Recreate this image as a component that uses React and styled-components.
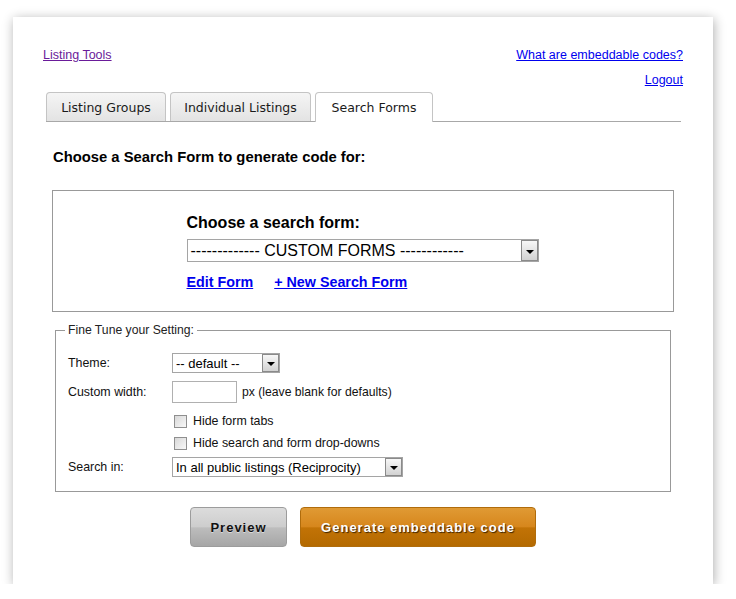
import React from "react";
import styled, { createGlobalStyle } from "styled-components";

const GlobalStyle = createGlobalStyle`
  html, body {
    margin: 0;
    padding: 0;
    background: #fff;
  }
  body {
    font-family: "Liberation Sans", Arial, sans-serif;
    font-size: 12px;
    color: #000;
  }
`;

const tabs = [
  { label: "Listing Groups", width: 120 },
  { label: "Individual Listings", width: 141 },
  { label: "Search Forms", width: 118, active: true },
];

function App() {
  return (
    <>
      <GlobalStyle />
      <Card>
        <TopRow>
          <NavLink href="#" $visited>
            Listing Tools
          </NavLink>
          <NavLink href="#">What are embeddable codes?</NavLink>
        </TopRow>
        <LogoutRow>
          <NavLink href="#">Logout</NavLink>
        </LogoutRow>

        <TabBar>
          {tabs.map((t) => (
            <Tab key={t.label} $active={t.active} $width={t.width}>
              {t.label}
            </Tab>
          ))}
        </TabBar>

        <Heading>Choose a Search Form to generate code for:</Heading>

        <ChooserBox>
          <Chooser>
            <ChooserTitle>Choose a search form:</ChooserTitle>
            <Select $width={352} $height={23} $size={16}>
              <span>------------- CUSTOM FORMS ------------</span>
              <Arrow $height={21} />
            </Select>
            <ActionLinks>
              <BoldLink href="#">Edit Form</BoldLink>
              <BoldLink href="#">+ New Search Form</BoldLink>
            </ActionLinks>
          </Chooser>
        </ChooserBox>

        <Settings>
          <Legend>Fine Tune your Setting:</Legend>
          <Row $h={20}>
            <Label>Theme:</Label>
            <Select $width={108} $height={20} $size={13}>
              <span>-- default --</span>
              <Arrow $height={18} />
            </Select>
          </Row>
          <Row $h={22} $mt={8}>
            <Label>Custom width:</Label>
            <WidthInput type="text" />
            <Hint>px (leave blank for defaults)</Hint>
          </Row>
          <Row $h={18} $mt={9}>
            <Label />
            <Check>
              <CheckBox type="checkbox" />
              Hide form tabs
            </Check>
          </Row>
          <Row $h={18} $mt={4}>
            <Label />
            <Check>
              <CheckBox type="checkbox" />
              Hide search and form drop-downs
            </Check>
          </Row>
          <Row $h={20} $mt={5}>
            <Label>Search in:</Label>
            <Select $width={231} $height={20} $size={13}>
              <span>In all public listings (Reciprocity)</span>
              <Arrow $height={18} />
            </Select>
          </Row>
        </Settings>

        <Buttons>
          <Button $width={97}>Preview</Button>
          <Button $width={236} $primary>
            Generate embeddable code
          </Button>
        </Buttons>
      </Card>
    </>
  );
}

const Card = styled.div`
  box-sizing: border-box;
  width: 700px;
  height: 567px;
  margin: 17px 0 0 13px;
  padding: 30px 30px 37px;
  background: #fff;
  box-shadow: 1px 2px 11px rgba(0, 0, 0, 0.32);
  display: flex;
  flex-direction: column;
`;

const TopRow = styled.div`
  display: flex;
  justify-content: space-between;
  line-height: 16px;
  font-size: 12.5px;
`;

const LogoutRow = styled(TopRow)`
  justify-content: flex-end;
  margin-top: 9px;
`;

const NavLink = styled.a`
  color: ${(p) => (p.$visited ? "#6a1b9a" : "#0000ee")};
  text-decoration: underline;
`;

const TabBar = styled.div`
  display: flex;
  align-items: flex-end;
  gap: 4px;
  height: 29px;
  margin: 4px 2px 0 3px;
  border-bottom: 1px solid #a8a8a8;
`;

const Tab = styled.div`
  box-sizing: border-box;
  width: ${(p) => p.$width}px;
  height: ${(p) => (p.$active ? 30 : 29)}px;
  margin-bottom: ${(p) => (p.$active ? -1 : 0)}px;
  display: flex;
  align-items: center;
  justify-content: center;
  padding-bottom: ${(p) => (p.$active ? 1 : 0)}px;
  border: 1px solid #c4c4c4;
  border-bottom: none;
  border-radius: 4px 4px 0 0;
  background: ${(p) =>
    p.$active ? "#fff" : "linear-gradient(#f5f5f5, #e3e3e3)"};
  font-family: "DejaVu Sans", Verdana, sans-serif;
  font-size: 12.5px;
  color: #1a1a1a;
`;

const Heading = styled.div`
  margin: 27px 0 0 10px;
  font-size: 14.8px;
  font-weight: bold;
  line-height: 16px;
`;

const ChooserBox = styled.div`
  box-sizing: border-box;
  height: 123px;
  margin: 25px 9px 0;
  padding-top: 22px;
  border: 1px solid #999;
  display: flex;
  justify-content: center;
`;

const Chooser = styled.div`
  display: flex;
  flex-direction: column;
  width: 352px;
  margin-left: -1px;
`;

const ChooserTitle = styled.div`
  font-size: 16px;
  font-weight: bold;
  line-height: 20px;
`;

const Select = styled.div`
  box-sizing: border-box;
  width: ${(p) => p.$width}px;
  height: ${(p) => p.$height}px;
  margin-top: ${(p) => (p.$size > 14 ? 6 : 0)}px;
  display: flex;
  align-items: center;
  border: 1px solid #a5a5a5;
  background: #fff;
  font-size: ${(p) => p.$size}px;
  color: #000;

  span {
    flex: 1;
    padding-left: 3px;
    white-space: nowrap;
    overflow: hidden;
  }
`;

const Arrow = styled.span`
  && {
    flex: 0 0 auto;
    padding: 0;
  }
  box-sizing: border-box;
  position: relative;
  width: 17px;
  height: ${(p) => p.$height}px;
  border: 1px solid #8a8a8a;
  background: linear-gradient(#f7f7f7, #d2d2d2);

  &::after {
    content: "";
    position: absolute;
    left: 4px;
    top: 50%;
    margin-top: -1px;
    border-left: 4px solid transparent;
    border-right: 4px solid transparent;
    border-top: 4px solid #000;
  }
`;

const ActionLinks = styled.div`
  display: flex;
  gap: 21px;
  margin-top: 11px;
  line-height: 18px;
`;

const BoldLink = styled.a`
  color: #0000ee;
  font-size: 14.3px;
  font-weight: bold;
  text-decoration: underline;
`;

const Settings = styled.fieldset`
  margin: 11px 12px 0;
  padding: 16px 12px 14px;
  border: 1px solid #999;
  min-width: 0;
`;

const Legend = styled.legend`
  margin-left: -3px;
  padding: 0 3px;
  font-size: 12.2px;
  line-height: 14px;
  color: #222;
`;

const Row = styled.div`
  display: flex;
  align-items: center;
  height: ${(p) => p.$h}px;
  margin-top: ${(p) => p.$mt || 0}px;
`;

const Label = styled.div`
  flex: 0 0 104px;
  font-size: 12.4px;
  color: #111;
`;

const WidthInput = styled.input`
  box-sizing: border-box;
  width: 65px;
  height: 22px;
  margin: 0;
  border: 1px solid #b0b0b0;
`;

const Hint = styled.span`
  margin-left: 5px;
  font-size: 12.2px;
  color: #111;
`;

const Check = styled.label`
  display: flex;
  align-items: center;
  gap: 6px;
  margin-left: 2px;
  font-size: 12.4px;
  color: #111;
`;

const CheckBox = styled.input`
  appearance: none;
  box-sizing: border-box;
  width: 13px;
  height: 13px;
  margin: 0;
  border: 1px solid #8f8f8f;
  background: linear-gradient(135deg, #d8d8d8, #f8f8f8);
`;

const Buttons = styled.div`
  display: flex;
  justify-content: center;
  gap: 13px;
  margin-top: 15px;
`;

const Button = styled.button`
  box-sizing: border-box;
  width: ${(p) => p.$width}px;
  height: 40px;
  border-radius: 4px;
  border: 1px solid ${(p) => (p.$primary ? "#b06c0c" : "#9c9c9c")};
  background: ${(p) =>
    p.$primary
      ? "linear-gradient(#e09a34 0%, #d6861c 50%, #c27306 52%, #b46a00 100%)"
      : "linear-gradient(#dcdcdc 0%, #cdcdcd 50%, #bdbdbd 52%, #a6a6a6 100%)"};
  color: ${(p) => (p.$primary ? "#fff" : "#111")};
  text-shadow: ${(p) =>
    p.$primary ? "1px 1px 1px rgba(0,0,0,0.7)" : "0 1px 0 rgba(255,255,255,0.5)"};
  font-family: "Liberation Sans", Arial, sans-serif;
  font-size: 13px;
  font-weight: bold;
  letter-spacing: 1px;
  cursor: pointer;
`;

export default App;
